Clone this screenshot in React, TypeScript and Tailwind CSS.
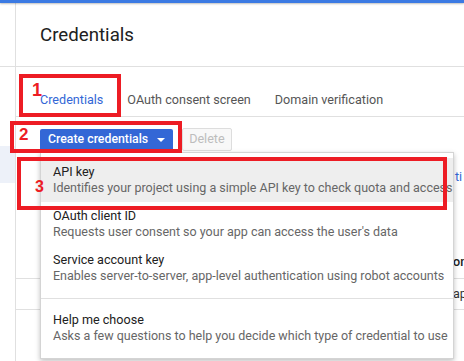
import React from 'react';

interface MenuItem {
  title: string;
  description: string;
  active?: boolean;
}

const items: MenuItem[] = [
  {
    title: 'API key',
    description: 'Identifies your project using a simple API key to check quota and access',
    active: true,
  },
  { title: 'OAuth client ID', description: "Requests user consent so your app can access the user's data" },
  {
    title: 'Service account key',
    description: 'Enables server-to-server, app-level authentication using robot accounts',
  },
];

const Item: React.FC<{ item: MenuItem }> = ({ item }) => (
  <div className={`h-[44px] pt-[6px] pl-[12px] ${item.active ? 'bg-[#eeeeee]' : ''}`}>
    <div className="leading-[16px] text-[12.6px] text-[#212121]">{item.title}</div>
    <div className="leading-[16px] text-[12.5px] text-[#666666] whitespace-nowrap">{item.description}</div>
  </div>
);

export default function App() {
  return (
    <div
      className="relative w-[464px] h-[361px] overflow-hidden bg-white"
      style={{ fontFamily: 'Roboto, "Liberation Sans", sans-serif' }}
    >
      <div className="h-[3px] bg-[#3b7ae3] shadow-[0_1px_2px_rgba(0,0,0,0.25)] relative z-10" />
      <div className="flex h-[358px]">
        <div className="w-[16px] shrink-0 border-r border-[#e0e0e0] flex flex-col">
          <div className="h-[64px] border-b border-[#e0e0e0]" />
          <div className="h-[79px]" />
          <div className="h-[37px] bg-[#edf1f9]" />
        </div>
        <div className="flex-1 min-w-0">
          <div className="h-[64px] border-b border-[#e0e0e0] pl-[24px] pt-[20px]">
            <h1 className="text-[18.7px] leading-[24px] text-[#212121] font-normal">Credentials</h1>
          </div>
          <div className="h-[50px] border-b border-[#e0e0e0] pl-[24px] flex items-end pb-[8px] gap-[24px] text-[12.6px] leading-[16px]">
            <span className="text-[#3367d6]">Credentials</span>
            <span className="text-[#555555]">OAuth consent screen</span>
            <span className="text-[#555555]">Domain verification</span>
          </div>
          <div className="flex items-center gap-[9px] pl-[24px] mt-[11px]">
            <button className="h-[22px] px-[8px] flex items-center bg-[#3367d6] text-white text-[12.3px] font-medium rounded-[2px]">
              Create credentials
              <span className="ml-[9px] w-0 h-0 border-l-[4px] border-r-[4px] border-t-[4px] border-l-transparent border-r-transparent border-t-white" />
            </button>
            <button className="h-[23px] px-[6px] border border-[#dddddd] bg-[#f8f8f8] text-[#bdbdbd] text-[12.6px] rounded-[2px]">
              Delete
            </button>
          </div>
          <div className="mt-[18px] pl-[439px] h-[16px] leading-[16px] text-[12.6px] text-[#3367d6] whitespace-nowrap">
            ti
          </div>
          <div className="mt-[61px] h-[33px] border-b border-[#e0e0e0] flex items-center pl-[437px] text-[12.6px] font-medium text-[#212121] whitespace-nowrap">
            on
          </div>
          <div className="h-[31px] border-b border-[#e0e0e0] flex items-center pl-[437px] text-[12.6px] text-[#333333] whitespace-nowrap">
            ap
          </div>
        </div>
      </div>

      <div className="absolute left-[40px] top-[152px] w-[414px] bg-white border border-[#d4d4d4] shadow-[0_2px_5px_rgba(0,0,0,0.25)] pt-[5px] pb-[8px]">
        {items.map((item) => (
          <Item key={item.title} item={item} />
        ))}
        <div className="mt-[8px] mb-[7px] h-px bg-[#e0e0e0]" />
        <Item item={{ title: 'Help me choose', description: 'Asks a few questions to help you decide which type of credential to use' }} />
      </div>

      <div className="absolute left-[19px] top-[74px] w-[102px] h-[43px] border-[4px] border-[#ed1c24]" />
      <div className="absolute left-[10px] top-[121px] w-[172px] h-[32px] border-[4px] border-[#ed1c24]" />
      <div className="absolute left-[17px] top-[157px] w-[430px] h-[53px] border-[4px] border-[#ed1c24]" />

      <span
        className="absolute left-[32px] top-[80px] text-[18px] leading-[20px] font-bold text-[#ed1c24]"
        style={{ fontFamily: '"Liberation Sans", sans-serif' }}
      >
        1
      </span>
      <span
        className="absolute left-[19px] top-[125px] text-[17px] leading-[20px] font-bold text-[#ed1c24]"
        style={{ fontFamily: '"Liberation Sans", sans-serif' }}
      >
        2
      </span>
      <span
        className="absolute left-[35px] top-[177px] text-[16px] leading-[20px] font-bold text-[#ed1c24]"
        style={{ fontFamily: '"Liberation Sans", sans-serif' }}
      >
        3
      </span>
    </div>
  );
}
